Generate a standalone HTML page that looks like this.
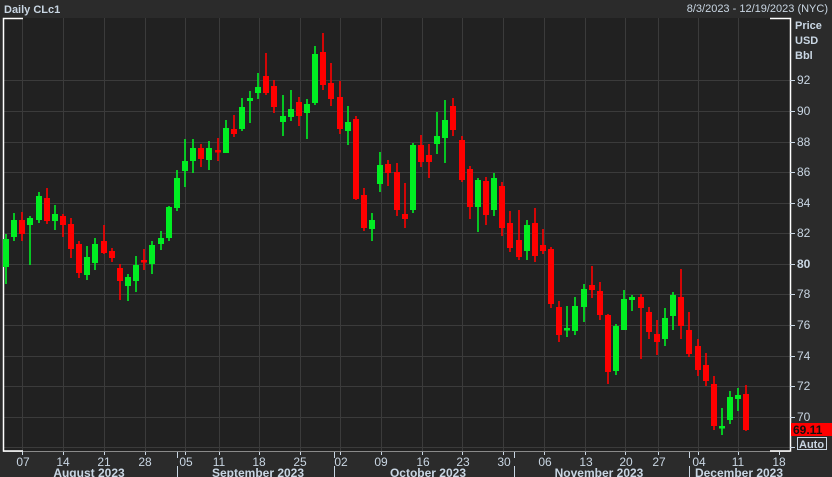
<!DOCTYPE html>
<html><head><meta charset="utf-8"><style>
html,body{margin:0;padding:0;background:#2b2b2b;width:832px;height:477px;overflow:hidden}
svg{display:block}
text{font-family:"Liberation Sans",sans-serif;}
</style></head><body>
<svg width="832" height="477" viewBox="0 0 832 477" xmlns="http://www.w3.org/2000/svg">
<rect width="832" height="477" fill="#2b2b2b"/>
<rect x="3" y="18" width="787" height="433" fill="#212121"/>
<g stroke="#3b3b3b" stroke-width="1">
<line x1="3" x2="790" y1="80.5" y2="80.5"/><line x1="3" x2="790" y1="111.5" y2="111.5"/>
<line x1="3" x2="790" y1="142.5" y2="142.5"/><line x1="3" x2="790" y1="172.5" y2="172.5"/>
<line x1="3" x2="790" y1="203.5" y2="203.5"/><line x1="3" x2="790" y1="233.5" y2="233.5"/>
<line x1="3" x2="790" y1="264.5" y2="264.5"/><line x1="3" x2="790" y1="294.5" y2="294.5"/>
<line x1="3" x2="790" y1="325.5" y2="325.5"/><line x1="3" x2="790" y1="356.5" y2="356.5"/>
<line x1="3" x2="790" y1="386.5" y2="386.5"/><line x1="3" x2="790" y1="417.5" y2="417.5"/>
<line x1="3" x2="790" y1="447.5" y2="447.5"/>
<line y1="18" y2="451" x1="22.5" x2="22.5"/><line y1="18" y2="451" x1="63.5" x2="63.5"/>
<line y1="18" y2="451" x1="104.5" x2="104.5"/><line y1="18" y2="451" x1="145.5" x2="145.5"/>
<line y1="18" y2="451" x1="185.5" x2="185.5"/><line y1="18" y2="451" x1="219.5" x2="219.5"/>
<line y1="18" y2="451" x1="259.5" x2="259.5"/><line y1="18" y2="451" x1="300.5" x2="300.5"/>
<line y1="18" y2="451" x1="340.5" x2="340.5"/><line y1="18" y2="451" x1="381.5" x2="381.5"/>
<line y1="18" y2="451" x1="422.5" x2="422.5"/><line y1="18" y2="451" x1="462.5" x2="462.5"/>
<line y1="18" y2="451" x1="503.5" x2="503.5"/><line y1="18" y2="451" x1="544.5" x2="544.5"/>
<line y1="18" y2="451" x1="585.5" x2="585.5"/><line y1="18" y2="451" x1="625.5" x2="625.5"/>
<line y1="18" y2="451" x1="658.5" x2="658.5"/><line y1="18" y2="451" x1="698.5" x2="698.5"/>
<line y1="18" y2="451" x1="738.5" x2="738.5"/>
</g>
<line x1="3" x2="790" y1="451.5" y2="451.5" stroke="#8a8a8a"/>
<g stroke="#fff" stroke-width="1.5" fill="none">
<polyline points="23,18.5 3.5,18.5 3.5,451 23,451"/>
<polyline points="770,18.5 790.5,18.5 790.5,451 770,451"/>
</g>

<!-- green wicks -->
<path fill="none" stroke="#00ee22" stroke-width="1.6" d="M6 234V284M14 213V241M30 216V265M39 192V223M55 205V230M87 246V280M95 238V270M128 274V301M136 256V292M152 241V274M161 231V250M169 206V241M177 170V211M185 139V187M193 139V173M209 141V170M226 120V153M242 98V131M250 91V123M258 73V99M283 95V136M291 90V121M307 99V139M315 46V105M348 106V145M372 213V241M380 152V192M413 143V213M437 112V154M445 100V163M478 178V232M494 173V216M527 220V260M567 306V337M575 297V335M584 284V322M616 324V375M624 290V330M632 295V311M665 308V346M673 292V330M722 408V435M730 391V424M738 388V411"/>
<!-- green bodies -->
<path fill="none" stroke="#00ee22" stroke-width="6" d="M6 239V267M14 220V237M30 218V225M39 196V220M55 214V221M87 257V275M95 244V263M128 277V286M136 265V281M152 245V264M161 238V244M169 207V238M177 178V208M185 161V171M193 148V161M209 148V160M226 128V153M242 107V129M250 98V101M258 87V93M283 116V122M291 109V117M307 104V113M315 54V103M348 122V131M372 220V229M380 165V184M413 145V210M437 136V144M445 120V138M478 180V207M494 178V210M527 225V251M567 328V330.5M575 306V331M584 289V307M616 326V371M624 299V330M632 297V300M665 318V339M673 295V316M722 426V428.5M730 397V420M738 395V399"/>
<!-- red wicks -->
<path fill="none" stroke="#ff0000" stroke-width="1.6" d="M22 212V241M47 188V224M63 214V237M71 218V258M79 241V278M104 225V254M112 248V262M120 264V300M144 249V270M201 144V167M218 138V161M234 115V137M266 53V95M274 80V113M299 97V126M323 33V90M331 63V106M340 81V134M356 116V200M364 188V231M388 160V186M397 163V216M405 183V228M421 135V167M429 144V178M453 98V136M462 136V182M470 166V219M486 177V225M502 182V236M510 211V252M519 210V260M535 208V262M543 229V254M551 247V308M559 301V342M592 266V298M600 282V320M608 314V384M641 294V359M649 307V339M657 320V355M681 269V339M689 312V357M698 339V376M706 353V386M714 376V430M746 385V431"/>
<!-- red bodies -->
<path fill="none" stroke="#ff0000" stroke-width="6" d="M22 220V234M47 198V221M63 216V225M71 224V249M79 244V273M104 241V253M112 251V258M120 268V281M144 260V262.5M201 148V159M218 150V152.5M234 129V134M266 76V93M274 86V107M299 102V116M323 52V85M331 83V99M340 97V129M356 119V199M364 195V228M388 164V173M397 172V210M405 214V219M421 145V162M429 155V162M453 106V130M462 140V180M470 169V207M486 181V215M502 186V228M510 223V248M519 240V257M535 223V256M543 245V251M551 249V304M559 307V335M592 285V290M600 291V315M608 315V372M641 297V308M649 312V332M657 334V342M681 297V326M689 330V354M698 346V370M706 365V381M714 384V426M746 394V430"/>

<text x="4" y="13" font-size="11" font-weight="bold" fill="#c9d6e3">Daily CLc1</text>
<text x="828" y="12" font-size="11" fill="#c9d6e3" text-anchor="end">8/3/2023 - 12/19/2023 (NYC)</text>
<g font-size="11" font-weight="bold" fill="#c9d6e3">
<text x="795" y="29">Price</text><text x="795" y="44">USD</text><text x="795" y="59">Bbl</text>
</g>
<g stroke="#c9d6e3" stroke-width="1">
<line x1="790" x2="795" y1="80.5" y2="80.5"/><line x1="790" x2="795" y1="111.5" y2="111.5"/>
<line x1="790" x2="795" y1="142.5" y2="142.5"/><line x1="790" x2="795" y1="172.5" y2="172.5"/>
<line x1="790" x2="795" y1="203.5" y2="203.5"/><line x1="790" x2="795" y1="233.5" y2="233.5"/>
<line x1="790" x2="795" y1="264.5" y2="264.5"/><line x1="790" x2="795" y1="294.5" y2="294.5"/>
<line x1="790" x2="795" y1="325.5" y2="325.5"/><line x1="790" x2="795" y1="356.5" y2="356.5"/>
<line x1="790" x2="795" y1="386.5" y2="386.5"/><line x1="790" x2="795" y1="417.5" y2="417.5"/>
<line x1="790" x2="795" y1="447.5" y2="447.5"/>
</g>
<g font-size="12" fill="#c9d6e3">
<text x="797" y="84">92</text><text x="797" y="115">90</text><text x="797" y="146">88</text>
<text x="797" y="176">86</text><text x="797" y="207">84</text><text x="797" y="237">82</text>
<text x="797" y="268" font-weight="bold">80</text><text x="797" y="298">78</text><text x="797" y="329">76</text>
<text x="797" y="360">74</text><text x="797" y="390">72</text><text x="797" y="421">70</text>
</g>
<rect x="791" y="423" width="41" height="13" fill="#ff0000"/>
<text x="793" y="434" font-size="12" font-weight="bold" fill="#111">69.11</text>
<rect x="797.5" y="437.5" width="29" height="12" fill="#2b2b2b" stroke="#c9d6e3"/>
<text x="799" y="448" font-size="11" font-weight="bold" fill="#c9d6e3">Auto</text>
<g font-size="12" fill="#c9d6e3" text-anchor="middle">
<text x="23" y="466">07</text><text x="63" y="466">14</text><text x="104" y="466">21</text><text x="145" y="466">28</text>
<text x="186" y="466">05</text><text x="219" y="466">11</text><text x="259" y="466">18</text><text x="300" y="466">25</text>
<text x="341" y="466">02</text><text x="381" y="466">09</text><text x="423" y="466">16</text><text x="463" y="466">23</text>
<text x="504" y="466">30</text><text x="545" y="466">06</text><text x="586" y="466">13</text><text x="626" y="466">20</text>
<text x="659" y="466">27</text><text x="699" y="466">04</text><text x="738" y="466">11</text><text x="779" y="466">18</text>
<g font-weight="bold">
<text x="89" y="477">August 2023</text><text x="258" y="477">September 2023</text>
<text x="428" y="477">October 2023</text><text x="599" y="477">November 2023</text><text x="739" y="477">December 2023</text>
</g>
</g>
<g stroke="#c9d6e3" stroke-width="1">
<line x1="22.5" x2="22.5" y1="452" y2="455"/><line x1="63.5" x2="63.5" y1="452" y2="455"/>
<line x1="104.5" x2="104.5" y1="452" y2="455"/><line x1="145.5" x2="145.5" y1="452" y2="455"/>
<line x1="185.5" x2="185.5" y1="452" y2="455"/><line x1="219.5" x2="219.5" y1="452" y2="455"/>
<line x1="259.5" x2="259.5" y1="452" y2="455"/><line x1="300.5" x2="300.5" y1="452" y2="455"/>
<line x1="340.5" x2="340.5" y1="452" y2="455"/><line x1="381.5" x2="381.5" y1="452" y2="455"/>
<line x1="422.5" x2="422.5" y1="452" y2="455"/><line x1="462.5" x2="462.5" y1="452" y2="455"/>
<line x1="503.5" x2="503.5" y1="452" y2="455"/><line x1="544.5" x2="544.5" y1="452" y2="455"/>
<line x1="585.5" x2="585.5" y1="452" y2="455"/><line x1="625.5" x2="625.5" y1="452" y2="455"/>
<line x1="658.5" x2="658.5" y1="452" y2="455"/><line x1="698.5" x2="698.5" y1="452" y2="455"/>
<line x1="738.5" x2="738.5" y1="452" y2="455"/><line x1="779.5" x2="779.5" y1="452" y2="455"/>
<line x1="177.5" x2="177.5" y1="452" y2="458"/><line x1="177.5" x2="177.5" y1="466" y2="477"/>
<line x1="334.5" x2="334.5" y1="452" y2="458"/><line x1="334.5" x2="334.5" y1="466" y2="477"/>
<line x1="514.5" x2="514.5" y1="452" y2="458"/><line x1="514.5" x2="514.5" y1="466" y2="477"/>
<line x1="689.5" x2="689.5" y1="452" y2="458"/><line x1="689.5" x2="689.5" y1="466" y2="477"/>
</g>
</svg>
</body></html>
